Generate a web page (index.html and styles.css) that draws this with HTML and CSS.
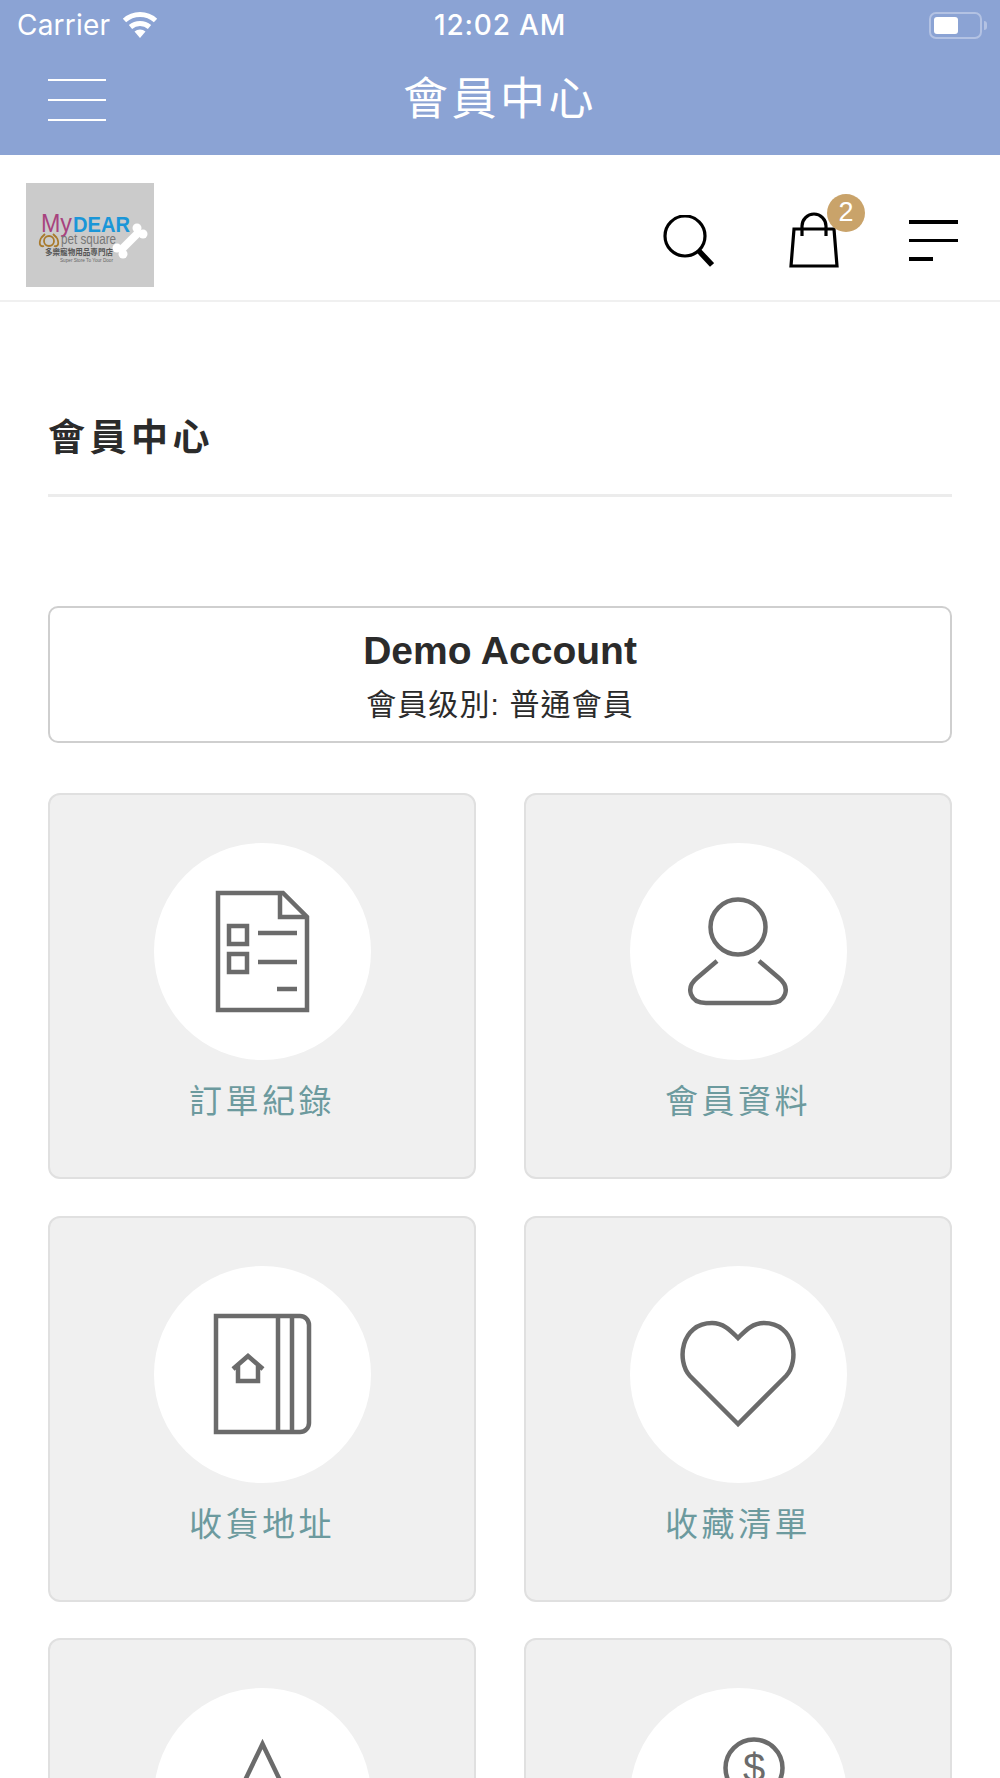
FILE: index.html
```html
<!DOCTYPE html>
<html lang="zh-Hant">
<head>
    <meta charset="UTF-8">
    <meta name="viewport" content="width=device-width, initial-scale=1.0">
    <title>會員中心</title>
    <link rel="stylesheet" href="styles.css">
</head>
<body>
    <div class="app-top">
        <div class="status-bar">
            <div class="status-left">
                <span class="carrier">Carrier</span>
                <svg class="wifi" width="38" height="28" viewBox="0 0 38 28">
                    <path d="M19 27 L13.500 20.500 A8.500 8.500 0 0 1 24.500 20.500 Z" fill="#fff"/>
                    <path d="M9.500 16 A14.500 14.500 0 0 1 28.500 16" class="wifi-arc"/>
                    <path d="M3.500 9.500 A23 23 0 0 1 34.500 9.500" class="wifi-arc"/>
                </svg>
            </div>
            <div class="status-time">12:02 AM</div>
            <div class="status-right">
                <div class="battery"><div class="battery-level"></div></div>
                <div class="battery-tip"></div>
            </div>
        </div>
        <div class="nav-bar">
            <div class="nav-burger">
                <span></span><span></span><span></span>
            </div>
            <div class="nav-title">會員中心</div>
        </div>
    </div>

    <header class="site-header">
        <!-- logo -->
        <svg class="logo" width="128" height="104" viewBox="0 0 128 104">
            <rect width="128" height="104" fill="#cbcbcb"/>
            <text x="15" y="49" class="logo-my" textLength="31" lengthAdjust="spacingAndGlyphs">My</text>
            <text x="47" y="49" class="logo-dear" textLength="57" lengthAdjust="spacingAndGlyphs">DEAR</text>
            <g fill="none" stroke="#a97a2c" stroke-width="1.800">
                <circle cx="23" cy="58" r="5"/>
                <path d="M15 55 C12 62 15 64 18 63 M31 55 C34 62 31 64 28 63"/>
                <path d="M15 55 L19 51 M31 55 L27 51"/>
            </g>
            <text x="35" y="61" class="logo-pet" textLength="55" lengthAdjust="spacingAndGlyphs">pet square</text>
            <text x="19" y="72" class="logo-cn" textLength="68" lengthAdjust="spacingAndGlyphs">多樂寵物用品專門店</text>
            <text x="34" y="79" class="logo-sub" textLength="53" lengthAdjust="spacingAndGlyphs">Super Store To Your Door</text>
            <g fill="#fff">
                <path d="M94 68 L114 48" stroke="#fff" stroke-width="8"/>
                <circle cx="91" cy="65" r="4.500"/>
                <circle cx="97" cy="71" r="4.500"/>
                <circle cx="111" cy="45" r="4.500"/>
                <circle cx="117" cy="51" r="4.500"/>
            </g>
        </svg>
        <div class="header-icons">
            <svg class="icon-search" width="52" height="54" viewBox="0 0 52 54">
                <circle cx="23" cy="21" r="20" class="line-black"/>
                <path d="M37 36 L50 50" stroke="#000" stroke-width="5.500"/>
            </svg>
            <div class="cart">
                <svg width="52" height="56" viewBox="0 0 52 56">
                    <path d="M3 54 L6 17 H46 L49 54 Z" class="line-black"/>
                    <path d="M14 24 V14 A12 12 0 0 1 38 14 V24" class="line-black"/>
                </svg>
                <span class="cart-badge">2</span>
            </div>
            <div class="header-menu">
                <span></span><span></span><span class="short"></span>
            </div>
        </div>
    </header>

    <main class="member">
        <h1 class="page-title">會員中心</h1>

        <section class="account-box">
            <div class="account-name">Demo Account</div>
            <div class="account-level">會員级別: 普通會員</div>
        </section>

        <section class="member-grid">
            <a class="member-card">
                <div class="card-circle">
                    <svg width="217" height="217" viewBox="0 0 217 217" class="line-grey">
                        <path d="M64 50 H129 L153 74 V167 H64 Z"/>
                        <path d="M126 50 V74 H153"/>
                        <rect x="75" y="83" width="18" height="18"/>
                        <rect x="75" y="111" width="18" height="18"/>
                        <path d="M104 90 H143 M104 119 H143 M123 146 H143"/>
                    </svg>
                </div>
                <div class="card-label">訂單紀錄</div>
            </a>
            <a class="member-card">
                <div class="card-circle">
                    <svg width="217" height="217" viewBox="0 0 217 217" class="line-grey">
                        <circle cx="108" cy="84" r="27.500"/>
                        <path d="M87 118 L67 135 C55 145 60 160 76 160 H140 C156 160 161 145 149 135 L129 118"/>
                    </svg>
                </div>
                <div class="card-label">會員資料</div>
            </a>
            <a class="member-card">
                <div class="card-circle">
                    <svg width="217" height="217" viewBox="0 0 217 217" class="line-grey">
                        <path d="M62 50 H146 A9 9 0 0 1 155 59 V157 A9 9 0 0 1 146 166 H62 Z"/>
                        <path d="M124 50 V166 M138 50 V166"/>
                        <path d="M79 103 L94 90 L109 103 M84 99 V115 H104 V99"/>
                    </svg>
                </div>
                <div class="card-label">收貨地址</div>
            </a>
            <a class="member-card">
                <div class="card-circle">
                    <svg width="217" height="217" viewBox="0 0 217 217" class="line-grey">
                        <path d="M108 158 L60 110 C46 95 51 57 82 57 C94 57 101 65 108 72 C115 65 122 57 134 57 C165 57 170 95 156 110 Z"/>
                    </svg>
                </div>
                <div class="card-label">收藏清單</div>
            </a>
            <a class="member-card">
                <div class="card-circle">
                    <svg width="217" height="217" viewBox="0 0 217 217" class="line-grey">
                        <path d="M108.500 56 L70 136 H147 Z"/>
                    </svg>
                </div>
            </a>
            <a class="member-card">
                <div class="card-circle">
                    <svg width="217" height="217" viewBox="0 0 217 217" class="line-grey">
                        <circle cx="124" cy="80" r="28.500"/>
                        <text x="124" y="94" class="coin-sign">$</text>
                    </svg>
                </div>
            </a>
        </section>
    </main>
</body>
</html>
```

FILE: styles.css
```css
html, body {
    margin: 0;
    padding: 0;
    height: 1778px;
    overflow: hidden;
}
body {
    background-color: #fff;
    color: #2b2b2b;
    font-family: "Liberation Sans", "Noto Sans CJK TC", sans-serif;
}

/* top blue bar */
.app-top {
    background-color: #8ba3d4;
    color: #fff;
    height: 155px;
}
.status-bar {
    display: grid;
    grid-template-columns: 1fr auto 1fr;
    align-items: center;
    height: 50px;
    font-family: Inter, "Liberation Sans", sans-serif;
    font-size: 28px;
}
.status-left {
    display: flex;
    align-items: center;
    gap: 11px;
    padding-left: 17px;
}
.carrier {
    font-weight: 400;
    letter-spacing: 0.2px;
}
.wifi-arc {
    fill: none;
    stroke: #fff;
    stroke-width: 5;
}
.status-time {
    font-weight: 500;
    letter-spacing: 0.8px;
}
.status-right {
    display: flex;
    align-items: center;
    justify-content: flex-end;
    gap: 2px;
    padding-right: 13px;
}
.battery {
    box-sizing: border-box;
    width: 53px;
    height: 27px;
    padding: 3px;
    border: 2px solid #b3c2e3;
    border-radius: 7px;
}
.battery-level {
    width: 24px;
    height: 17px;
    background-color: #fff;
    border-radius: 3px;
}
.battery-tip {
    width: 3px;
    height: 9px;
    background-color: #b3c2e3;
    border-radius: 0 3px 3px 0;
}
.nav-bar {
    display: flex;
    align-items: center;
    height: 100px;
    padding-left: 48px;
    position: relative;
}
.nav-burger {
    display: flex;
    flex-direction: column;
    gap: 17.500px;
    width: 58px;
}
.nav-burger span {
    display: block;
    height: 2.500px;
    background-color: #fff;
}
.nav-title {
    position: absolute;
    left: 0;
    right: 0;
    top: 16px;
    text-align: center;
    font-family: "Noto Sans CJK TC", sans-serif;
    font-size: 45px;
    font-weight: 400;
    letter-spacing: 3.500px;
    line-height: 60px;
}

/* shop header */
.site-header {
    display: flex;
    align-items: flex-start;
    justify-content: space-between;
    box-sizing: border-box;
    height: 147px;
    padding: 28px 42px 0 26px;
    border-bottom: 2px solid #f0f0f0;
}
.logo {
    display: block;
}
.logo-my {
    font-family: "Liberation Sans", sans-serif;
    font-size: 26px;
    fill: #a8427e;
}
.logo-dear {
    font-family: "Liberation Sans", sans-serif;
    font-size: 22px;
    font-weight: bold;
    fill: #1a96d8;
}
.logo-pet {
    font-family: "Liberation Sans", sans-serif;
    font-size: 14px;
    fill: #777;
}
.logo-cn {
    font-family: "Noto Sans CJK TC", sans-serif;
    font-size: 8px;
    font-weight: bold;
    fill: #555;
}
.logo-sub {
    font-family: "Liberation Sans", sans-serif;
    font-size: 4.500px;
    fill: #666;
}
.header-icons {
    display: flex;
    align-items: flex-start;
    margin-top: 29px;
}
.icon-search {
    margin-top: 3px;
}
.line-black {
    fill: none;
    stroke: #000;
    stroke-width: 3.200;
}
.cart {
    position: relative;
    margin-left: 74px;
    line-height: 0;
}
.cart-badge {
    position: absolute;
    top: -18px;
    left: 39px;
    width: 38px;
    height: 38px;
    border-radius: 50%;
    background-color: #c9a36a;
    color: #fff;
    font-size: 27px;
    line-height: 36px;
    text-align: center;
}
.header-menu {
    display: flex;
    flex-direction: column;
    gap: 15px;
    width: 49px;
    margin-left: 69px;
    margin-top: 8px;
}
.header-menu span {
    display: block;
    height: 3.500px;
    background-color: #000;
}
.header-menu .short {
    width: 24px;
}

/* member centre */
.member {
    padding: 0 48px;
}
.page-title {
    margin: 0 0 109px 0;
    padding: 112px 0 30px 0;
    border-bottom: 3px solid #ececec;
    font-size: 37px;
    font-weight: bold;
    letter-spacing: 4.500px;
    line-height: 50px;
}
.account-box {
    box-sizing: border-box;
    height: 137px;
    padding-top: 20px;
    margin-bottom: 50px;
    border: 2px solid #cfcfcf;
    border-radius: 10px;
    text-align: center;
}
.account-name {
    font-size: 39px;
    font-weight: bold;
    line-height: 46px;
}
.account-level {
    margin-top: 8px;
    font-size: 30px;
    letter-spacing: 1.100px;
    line-height: 46px;
}
.member-grid {
    display: grid;
    grid-template-columns: 428px 428px;
    column-gap: 48px;
    row-gap: 36.500px;
}
.member-card {
    display: block;
    box-sizing: border-box;
    height: 386px;
    padding-top: 48px;
    background-color: #f0f0f0;
    border: 2px solid #e0e0e0;
    border-radius: 12px;
}
.card-circle {
    width: 217px;
    height: 217px;
    margin: 0 auto;
    background-color: #fff;
    border-radius: 50%;
    line-height: 0;
}
.line-grey {
    fill: none;
    stroke: #6b6b6b;
    stroke-width: 4.500;
}
.coin-sign {
    fill: #6b6b6b;
    stroke: none;
    font-size: 40px;
    text-anchor: middle;
}
.card-label {
    margin-top: 19px;
    color: #6c9a9e;
    font-family: "Noto Sans CJK TC", sans-serif;
    font-size: 33px;
    letter-spacing: 3.500px;
    line-height: 40px;
    text-align: center;
}
```
